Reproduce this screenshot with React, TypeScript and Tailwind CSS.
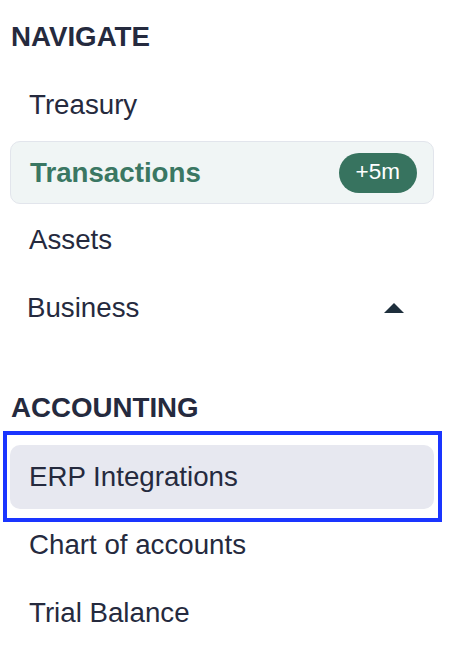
import type { ReactNode } from 'react';

const font = { fontFamily: '"Liberation Sans", Arial, sans-serif' };

function SectionTitle({ children }: { children: ReactNode }) {
  return (
    <div className="h-10 flex items-center pl-px text-[27.7px] font-bold text-[#252a3e] leading-none">
      {children}
    </div>
  );
}

function NavItem({ label, className = '' }: { label: string; className?: string }) {
  return (
    <div
      className={`h-16 flex items-center px-[19px] rounded-[10px] text-[27.7px] text-[#252a3e] leading-none ${className}`}
    >
      {label}
    </div>
  );
}

export default function App() {
  return (
    <div className="w-[472px] h-[668px] bg-white pl-[10px] pt-[17px]" style={font}>
      <div className="w-[424px]">
        {/* Navigate */}
        <SectionTitle>NAVIGATE</SectionTitle>
        <div className="mt-4 flex flex-col gap-1">
          <NavItem label="Treasury" />
          <div className="h-[63px] flex items-center justify-between pl-[19px] pr-4 rounded-[10px] bg-[#f0f5f5] border border-[#e2e5ec]">
            <span className="text-[27.7px] font-bold text-[#3a7763] leading-none">Transactions</span>
            <span className="h-10 px-[17px] flex items-center rounded-full bg-[#37735f] text-white text-[22.5px] leading-none">
              +5m
            </span>
          </div>
          <NavItem label="Assets" />
          <div className="h-16 flex items-center justify-between pl-[17px] pr-[30px] text-[27.7px] text-[#252a3e] leading-none">
            <span>Business</span>
            <svg width="20" height="10" viewBox="0 0 20 10">
              <path d="M10 0 L20 10 L0 10 Z" fill="#1e2f3c" />
            </svg>
          </div>
        </div>

        {/* Accounting */}
        <div className="mt-12">
          <SectionTitle>ACCOUNTING</SectionTitle>
        </div>
        <div className="mt-[17px] flex flex-col gap-1">
          <div className="relative">
            <NavItem label="ERP Integrations" className="bg-[#e7e8f0]" />
            <div className="absolute -top-[14px] -bottom-[13px] -left-[7px] -right-[8px] border-4 border-[#1a35ff] pointer-events-none" />
          </div>
          <NavItem label="Chart of accounts" />
          <NavItem label="Trial Balance" />
        </div>
      </div>
    </div>
  );
}
